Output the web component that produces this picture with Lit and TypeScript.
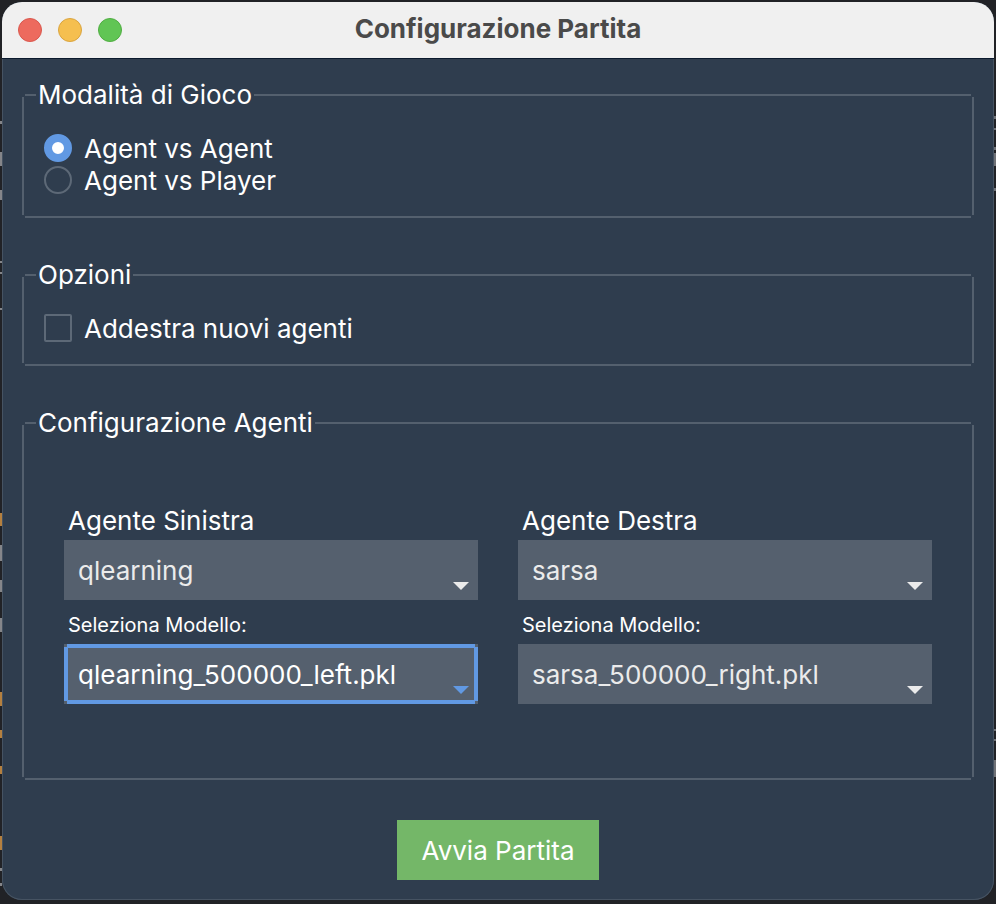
import { LitElement, html, css } from "lit";
import { customElement, property, state } from "lit/decorators.js";

@customElement("agent-select")
class AgentSelect extends LitElement {
  static styles = css`
    :host {
      display: block;
    }
    .label {
      display: block;
      padding: 2px 0 0 4px;
      font-size: 26px;
      line-height: 38px;
      color: #fff;
    }
    .label.small {
      margin-top: 4px;
      font-size: 20px;
    }
    .box {
      position: relative;
    }
    select {
      appearance: none;
      display: block;
      box-sizing: border-box;
      width: 100%;
      height: 60px;
      margin: 0;
      padding: 2px 36px 0 14px;
      border: 0;
      border-radius: 0;
      outline: none;
      background: #55606e;
      color: #ebebeb;
      font: inherit;
      font-size: 26px;
      line-height: 32px;
    }
    .active select {
      color: #fff;
      background:
        linear-gradient(#6199e3, #6199e3) 3px 0 / calc(100% - 6px) 4px no-repeat,
        linear-gradient(#6199e3, #6199e3) 3px 100% / calc(100% - 6px) 4px no-repeat,
        linear-gradient(#6199e3, #6199e3) 0 3px / 4px calc(100% - 6px) no-repeat,
        linear-gradient(#6199e3, #6199e3) 100% 3px / 4px calc(100% - 6px) no-repeat,
        #55606e;
    }
    .arrow {
      position: absolute;
      right: 9px;
      bottom: 10px;
      width: 16px;
      height: 8px;
      fill: #ebebeb;
      pointer-events: none;
    }
    .active .arrow {
      fill: #6199e3;
    }
  `;

  @property() label = "";
  @property() value = "";
  @property({ type: Boolean }) small = false;
  @property({ type: Boolean }) active = false;

  render() {
    return html`
      <label class="label ${this.small ? "small" : ""}" for="field">${this.label}</label>
      <div class="box ${this.active ? "active" : ""}">
        <select id="field">
          <option selected>${this.value}</option>
        </select>
        <svg class="arrow" viewBox="0 0 16 8" aria-hidden="true"><path d="M0 0H16L8 8Z" /></svg>
      </div>
    `;
  }
}

@customElement("app-root")
class AppRoot extends LitElement {
  static styles = css`
    :host {
      display: flex;
      flex-direction: column;
      box-sizing: border-box;
      min-height: 100vh;
      padding: 2px 2px 4px;
      /* slivers of the editor window that lies behind the dialog */
      background:
        linear-gradient(#85868a, #85868a) 0 121px / 2px 3px no-repeat,
        linear-gradient(#85868a, #85868a) 0 152px / 2px 14px no-repeat,
        linear-gradient(#85868a, #85868a) 0 190px / 2px 10px no-repeat,
        linear-gradient(#85868a, #85868a) 0 261px / 2px 2px no-repeat,
        linear-gradient(#85868a, #85868a) 0 272px / 2px 2px no-repeat,
        linear-gradient(#85868a, #85868a) 0 308px / 2px 2px no-repeat,
        linear-gradient(#b5803f, #b5803f) 0 513px / 2px 13px no-repeat,
        linear-gradient(#85868a, #85868a) 0 545px / 2px 16px no-repeat,
        linear-gradient(#85868a, #85868a) 0 580px / 2px 12px no-repeat,
        linear-gradient(#85868a, #85868a) 0 618px / 2px 14px no-repeat,
        linear-gradient(#b5803f, #b5803f) 0 692px / 2px 14px no-repeat,
        linear-gradient(#b5803f, #b5803f) 0 730px / 2px 8px no-repeat,
        linear-gradient(#b5803f, #b5803f) 0 766px / 2px 8px no-repeat,
        linear-gradient(#b5803f, #b5803f) 0 836px / 2px 14px no-repeat,
        linear-gradient(#85868a, #85868a) 0 868px / 2px 3px no-repeat,
        linear-gradient(#85868a, #85868a) 0 883px / 2px 3px no-repeat,
        linear-gradient(#6f7176, #6f7176) 100% 116px / 2px 3px no-repeat,
        linear-gradient(#6f7176, #6f7176) 100% 128px / 2px 2px no-repeat,
        linear-gradient(#6f7176, #6f7176) 100% 147px / 2px 3px no-repeat,
        linear-gradient(#6f7176, #6f7176) 100% 153px / 2px 13px no-repeat,
        linear-gradient(#6f7176, #6f7176) 100% 188px / 2px 3px no-repeat,
        linear-gradient(#6f7176, #6f7176) 100% 729px / 2px 2px no-repeat,
        linear-gradient(#6f7176, #6f7176) 100% 739px / 2px 2px no-repeat,
        linear-gradient(#6f7176, #6f7176) 100% 760px / 2px 17px no-repeat,
        #212226;
      font-family: Inter, "Liberation Sans", sans-serif;
      color: #fff;
    }
    .window {
      flex: 1;
      display: flex;
      flex-direction: column;
      border-radius: 20px;
      overflow: hidden;
      background: #2f3d4e;
      box-shadow: inset 0 0 0 1px #465362;
    }
    .titlebar {
      display: grid;
      grid-template-columns: 1fr auto 1fr;
      align-items: center;
      height: 56px;
      padding: 0 16px;
      background: #f0f0f0;
      border-bottom: 1px solid #0b1a2e;
    }
    .lights {
      display: flex;
      gap: 16px;
    }
    .light {
      box-sizing: border-box;
      width: 24px;
      height: 24px;
      padding: 0;
      border: 1px solid #d9584e;
      border-radius: 50%;
      background: #ed6a5e;
    }
    .light.min {
      border-color: #d9a440;
      background: #f5bf4f;
    }
    .light.max {
      border-color: #50ad42;
      background: #61c554;
    }
    h1 {
      margin: 0;
      padding-bottom: 2px;
      font-size: 26px;
      line-height: 32px;
      font-weight: 700;
      color: #4a4a4a;
    }
    form {
      display: flex;
      flex-direction: column;
      gap: 41px;
      padding: 20px;
    }
    fieldset {
      min-width: 0;
      margin: 0;
      padding: 21px 20px 20px;
      border: 2px solid transparent;
      background:
        linear-gradient(#54606e, #54606e) 3px 0 / calc(100% - 6px) 2px no-repeat,
        linear-gradient(#54606e, #54606e) 3px 100% / calc(100% - 6px) 2px no-repeat,
        linear-gradient(#54606e, #54606e) 0 3px / 2px calc(100% - 6px) no-repeat,
        linear-gradient(#54606e, #54606e) 100% 3px / 2px calc(100% - 6px) no-repeat;
      background-origin: border-box;
    }
    fieldset.agents {
      padding: 61px 40px 74px;
    }
    legend {
      margin-left: -8px;
      padding: 0 2px;
      background: #2f3d4e;
      font-size: 26px;
      line-height: 32px;
    }
    .agents legend {
      margin-left: -28px;
    }
    .choice {
      display: flex;
      align-items: center;
      gap: 12px;
      font-size: 26px;
      line-height: 30px;
    }
    .choice span {
      padding-top: 2px;
    }
    .choice input {
      appearance: none;
      box-sizing: border-box;
      width: 28px;
      height: 28px;
      margin: 0;
      border: 2px solid #5d6977;
      border-radius: 2px;
    }
    .choice input[type="radio"] {
      border-radius: 50%;
    }
    .choice input[type="radio"]:checked {
      border: 8px solid #6199e3;
      background: #fff;
    }
    .columns {
      display: grid;
      grid-template-columns: 1fr 1fr;
      gap: 40px;
    }
    .start {
      align-self: center;
      height: 60px;
      margin-top: -1px;
      padding: 2px 24px 0;
      border: 0;
      background: #74b768;
      color: #fff;
      font: inherit;
      font-size: 26px;
      line-height: 32px;
    }
  `;

  @state() private mode = "agent";

  private choice(value: string, text: string) {
    return html`
      <label class="choice">
        <input type="radio" name="mode" .checked=${this.mode === value} @change=${() => (this.mode = value)} />
        <span>${text}</span>
      </label>
    `;
  }

  render() {
    return html`
      <main class="window">
        <header class="titlebar">
          <div class="lights">
            <button class="light" aria-label="Chiudi"></button>
            <button class="light min" aria-label="Riduci"></button>
            <button class="light max" aria-label="Ingrandisci"></button>
          </div>
          <h1>Configurazione Partita</h1>
        </header>
        <form @submit=${(e: Event) => e.preventDefault()}>
          <fieldset>
            <legend>Modalità di Gioco</legend>
            ${this.choice("agent", "Agent vs Agent")} ${this.choice("player", "Agent vs Player")}
          </fieldset>
          <fieldset>
            <legend>Opzioni</legend>
            <label class="choice"><input type="checkbox" /><span>Addestra nuovi agenti</span></label>
          </fieldset>
          <fieldset class="agents">
            <legend>Configurazione Agenti</legend>
            <div class="columns">
              <div>
                <agent-select label="Agente Sinistra" value="qlearning"></agent-select>
                <agent-select small active label="Seleziona Modello:" value="qlearning_500000_left.pkl"></agent-select>
              </div>
              <div>
                <agent-select label="Agente Destra" value="sarsa"></agent-select>
                <agent-select small label="Seleziona Modello:" value="sarsa_500000_right.pkl"></agent-select>
              </div>
            </div>
          </fieldset>
          <button class="start">Avvia Partita</button>
        </form>
      </main>
    `;
  }
}
